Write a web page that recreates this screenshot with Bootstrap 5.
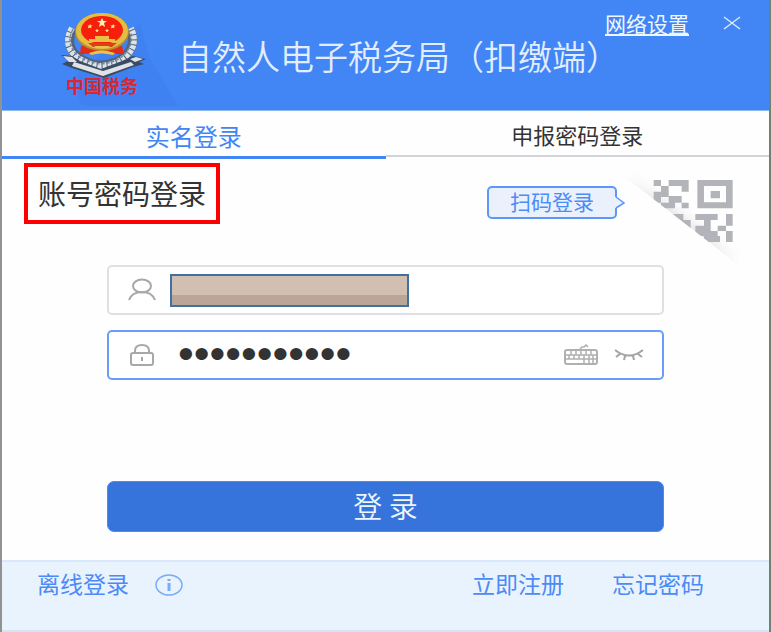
<!DOCTYPE html>
<html lang="zh-CN">
<head>
<meta charset="utf-8">
<meta name="viewport" content="width=device-width, initial-scale=1">
<title>自然人电子税务局（扣缴端）</title>
<link href="https://cdn.jsdelivr.net/npm/bootstrap@5.3.0/dist/css/bootstrap.min.css" rel="stylesheet">
<style>
:root { --brand: #4285f5; --gap-side: 105px; }
body { font-family: "Noto Sans CJK SC", "Liberation Sans", sans-serif; color: #333; background: #fefefe; }
svg { display: block; flex: none; }
.login-window { border-left: 2px solid #929292; border-right: 2px solid #75806c; }
.title-bar { background: var(--brand); min-height: 111px; border-bottom: 1px solid #8abaf0; padding-left: 56px; }
.app-title { font-size: 34px; font-weight: 350; line-height: 40px; padding-top: 36px; white-space: nowrap; color: #e2eeff; }
.window-tools { top: 11px; right: 28px; gap: 34px; }
.window-tools a { font-size: 21px; line-height: 24px; color: #eef6ff; }
.plain-btn { border: 0; background: none; padding: 0; }
.tab-row .nav-link { border-radius: 0; font-size: 24px; line-height: 24px; color: #333; padding: 13px 0 8px; border-bottom: 2px solid #d3d3da; }
.tab-row .nav-link:last-child { font-size: 22px; padding: 11px 0 9px; }
.tab-row .nav-link.active { color: var(--brand); background: none; border-bottom: 3px solid var(--brand); }
.mode-row { padding: 4px 24px 0 22px; min-height: 105px; }
.mode-title { border: 4px solid #f00; font-size: 28px; line-height: 32px; padding: 10px; margin: 0; height: 61px; font-weight: 400; }
.scan-group { margin-left: auto; padding-top: 23px; }
.scan-btn { border: 2px solid #5c98f8; border-radius: 5px; background: #eaf1fd; color: #4c8cf7; font-size: 21px; line-height: 27px; padding: 0 21px 2px; height: 33px; }
.scan-arrow { margin-left: -2px; }
.qr-btn { margin-top: 2px; }
.login-form { padding: 0 var(--gap-side); }
.field-box { height: 50px; border: 2px solid #e0e0e4; border-radius: 5px; background: #fff; padding: 0 18px 0 19px; }
.field-box.focused { border-color: #689ef8; margin-top: 15px; }
.field-box input { border: 0; background: transparent; outline: 0; min-width: 0; padding: 0; color: #333; }
.field-box input[type=password] { font-family: "Liberation Sans", sans-serif; font-size: 45px; line-height: 44px; height: 44px; margin: 0 0 2px 22px; }
.user-mask { width: 239px; height: 33px; border: 2px solid #41729f; background: linear-gradient(#d1bfb1 0 64%, #baa596 64%); margin-left: 14px; }
.submit-btn { --bs-btn-bg: #3674db; --bs-btn-border-color: #4c8af0; --bs-btn-color: #eef5ff; height: 51px; font-size: 29px; font-weight: 350; line-height: 36px; border-radius: 7px; padding: 2px 4px 6px; margin-top: 101px; }
.foot-bar { background: #e9f3fe; border-top: 2px solid #d9e8fa; border-bottom: 2px solid #d4e4f5; margin-top: 28px; padding: 7px 65px 0 35px; }
.foot-bar a { color: #4c8bf5; font-size: 23px; line-height: 28px; text-decoration: none; white-space: nowrap; }
.foot-links { gap: 48px; }
</style>
</head>
<body>
<main class="login-window min-vh-100 d-flex flex-column">
  <header class="title-bar position-relative d-flex">
    <svg width="120" height="110" viewBox="0 0 120 110" role="img" aria-label="中国税务">
      <path d="M82 24L91 57L120 106H24L14 78Z" fill="#3f81f1"/>
      <g fill="none" stroke="#52657f" stroke-width="9">
        <path d="M15 29Q6 45 20 57Q31 65 43 65Q58 64 67 56Q79 45 72 29"/>
      </g>
      <g fill="none" stroke="#dce3e9" stroke-width="6" stroke-dasharray="4 1">
        <path d="M14 28Q4 45 19 57Q30 65 43 66Q57 65 67 57Q81 46 73 28"/>
      </g>
      <path d="M15 29Q7 44 20 56Q30 63 43 64Q57 63 66 55Q77 43 72 30" fill="none" stroke="#77879b" stroke-width="1.500" stroke-dasharray="3 2"/>
      <path d="M3 55L14 56L22 61L43 69L64 61L75 56L88 59L81 62L86 64L75 67L46 78L14 68L4 64L10 61Z" fill="#3a4b62"/>
      <path d="M5 56L14 57L19 62L11 62ZM16 62L45 71L73 62L76 65L45 76L14 66ZM72 59L78 57L85 59L77 62Z" fill="#dfe2e7"/>
      <path d="M23 46L64 46L66 54H22Z" fill="#e62a19"/>
      <ellipse cx="44" cy="32" rx="27" ry="19" fill="#b38f31"/>
      <ellipse cx="44" cy="31" rx="26" ry="18" fill="#e4bd43"/>
      <ellipse cx="44" cy="30" rx="21" ry="14" fill="#f51f0b"/>
      <path d="M44 18L45.500 21H49L46 23L47 27L44 25L41 27L42 23L39 21H42.500Z" fill="#fff0b5"/>
      <path d="M32 24l1 1.500h2l-2 1 .5 2-1.500-1-2 1 .5-2-1-1h2zM55 24l1 1.500h2l-2 1 .5 2-1.500-1-2 1 .5-2-1-1h2zM39 29l1 1h1l-1 1v1l-1-.5-1 .5v-1l-1-1h1zM49 29l1 1h1l-1 1v1l-1-.5-1 .5v-1l-1-1h1z" fill="#ffe38d"/>
      <path d="M37 36H51V39H57V42H31V39H37Z" fill="#e7c044"/>
      <path d="M30 43H59L54 47H35Z" fill="#d4441b"/>
      <path d="M31 53Q43 48 57 53L55 55Q43 52 33 55ZM36 46H52L49 48H39Z" fill="#edc348"/>
      <text x="8" y="93" font-family="Noto Sans CJK SC, sans-serif" font-size="18" font-weight="700" fill="#d82731">中国税务</text>
    </svg>
    <h1 class="app-title mb-0">自然人电子税务局（扣缴端）</h1>
    <div class="window-tools position-absolute d-flex align-items-center">
      <a href="#">网络设置</a>
      <button class="plain-btn" type="button" aria-label="关闭">
        <svg width="18" height="14" viewBox="0 0 18 14"><path d="M1 1L17 13M17 1L1 13" stroke="#dbe9fc" stroke-width="1.500"/></svg>
      </button>
    </div>
  </header>

  <nav class="tab-row nav nav-pills nav-justified align-items-start flex-nowrap">
    <a class="nav-link active" href="#" aria-current="page">实名登录</a>
    <a class="nav-link" href="#">申报密码登录</a>
  </nav>

  <div class="mode-row d-flex align-items-start">
    <h2 class="mode-title text-nowrap">账号密码登录</h2>
    <div class="scan-group d-flex">
      <button class="scan-btn text-nowrap" type="button">扫码登录</button>
      <svg class="scan-arrow" width="10" height="33" viewBox="0 0 10 33"><path d="M0 11H1L9 17L1 22H0Z" fill="#eaf1fd"/><path d="M1 11L9 17L1 22" fill="none" stroke="#5c98f8" stroke-width="1.500"/></svg>
    </div>
    <button class="plain-btn qr-btn" type="button" aria-label="二维码登录">
      <svg width="120" height="100" viewBox="0 0 360 300">
        <defs>
          <clipPath id="fold"><path d="M0 36L340 300H360V0H0Z"/></clipPath>
          <linearGradient id="shade" gradientUnits="userSpaceOnUse" x1="165" y1="165" x2="200" y2="120"><stop stop-color="#e6e6e8"/><stop offset="1" stop-color="#fff" stop-opacity="0"/></linearGradient>
          <linearGradient id="ends" gradientUnits="userSpaceOnUse" x1="0" y1="36" x2="340" y2="300"><stop stop-color="#fefefe"/><stop offset=".3" stop-color="#fefefe" stop-opacity="0"/><stop offset=".7" stop-color="#fefefe" stop-opacity="0"/><stop offset="1" stop-color="#fefefe"/></linearGradient>
        </defs>
        <g clip-path="url(#fold)">
          <path d="M0 36L340 300H360V240L60 0H0Z" fill="url(#shade)"/>
          <path d="M0 36L340 300H360V240L60 0H0Z" fill="url(#ends)"/>
          <g fill="#b3b4b9">
            <path d="M86 45H108V63H86ZM108 63H131V96H108ZM86 80H108V113H86ZM131 93H170V113H131ZM108 113H150V130H108ZM170 113H191V130H170Z"/>
            <path d="M131 45H191V80H170V63H131Z"/>
            <path fill-rule="evenodd" d="M217 45H323V130H217ZM237 63V112H303V63ZM257 78H285V100H257Z"/>
            <path d="M145 147H175V165H197V192H145Z"/>
            <path d="M211 147H278V165H257V182H237V165H211ZM211 182H257V198H278V213H285V231H237V213H211Z"/>
            <path d="M303 147H323V182H303V198H323V231H303V198H278V182H303Z"/>
          </g>
        </g>
      </svg>
    </button>
  </div>

  <form class="login-form" onsubmit="return false">
    <div class="field-box d-flex align-items-center">
      <svg width="28" height="24" viewBox="0 0 28 24" fill="none" stroke="#a8a8a8" stroke-width="2"><ellipse cx="14" cy="8" rx="9" ry="6.500"/><path d="M1 22Q4 14 14 14Q24 14 27 22"/></svg>
      <div class="user-mask flex-shrink-1"></div>
      <input class="flex-fill" type="text" aria-label="账号">
    </div>
    <div class="field-box focused d-flex align-items-center">
      <svg width="28" height="24" viewBox="0 0 28 24" fill="none" stroke="#a8a8a8" stroke-width="2"><rect x="3" y="10" width="22" height="12" rx="2"/><path d="M7 10V8Q7 2 14 2T21 8V10M14 14V18"/></svg>
      <input class="flex-fill" type="password" value="12345678901" aria-label="密码">
      <button class="plain-btn ms-3" type="button" aria-label="软键盘">
        <svg width="34" height="22" viewBox="0 0 34 22" fill="none" stroke="#b0b0b0" stroke-width="1.500"><rect x="1" y="6" width="32" height="14" rx="2" stroke-width="2"/><path d="M2 11H32M2 15H32M7 7V11M12 7V11M17 7V11M22 7V11M27 7V11M5 11V15M10 11V15M15 11V15M20 11V15M25 11V15M29 11V15M20 15V19M25 15V19M29 15V20M16 5L18 3H20L22 1L24 3"/></svg>
      </button>
      <button class="plain-btn ms-3" type="button" aria-label="显示密码">
        <svg width="30" height="16" viewBox="0 0 30 16" fill="none" stroke="#a3a3a3" stroke-width="2"><path d="M1 3Q15 14 29 3M6 7L2 10M11 9L10 13M19 9L20 13M24 7L28 10"/></svg>
      </button>
    </div>
    <button class="btn submit-btn w-100" type="submit">登 录</button>
  </form>

  <footer class="foot-bar flex-fill d-flex align-items-start justify-content-between">
    <div class="d-flex">
      <a href="#">离线登录</a>
      <button class="plain-btn ms-4 pt-1" type="button" aria-label="离线登录说明">
        <svg width="32" height="24" viewBox="0 0 32 24"><ellipse cx="16" cy="12" rx="13" ry="10" fill="none" stroke="#7aaaf8" stroke-width="1.500"/><path d="M16 6V8M16 10V18" stroke="#7aaaf8" stroke-width="3"/></svg>
      </button>
    </div>
    <div class="foot-links d-flex">
      <a href="#">立即注册</a>
      <a href="#">忘记密码</a>
    </div>
  </footer>
</main>
<script src="https://cdn.jsdelivr.net/npm/bootstrap@5.3.0/dist/js/bootstrap.bundle.min.js"></script>
</body>
</html>
